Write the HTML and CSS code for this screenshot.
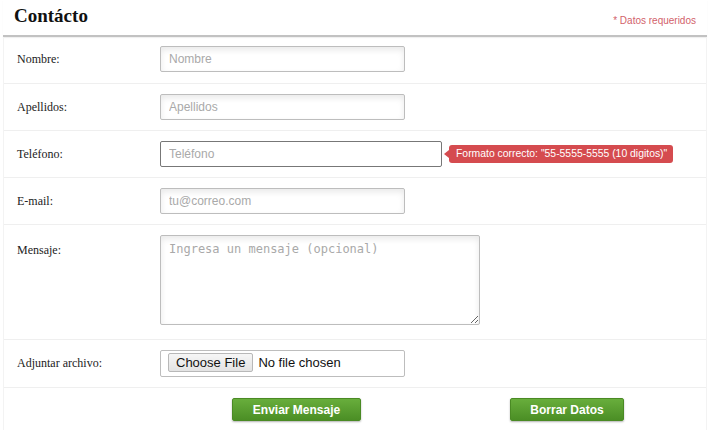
FILE: index.html
```html
<!DOCTYPE html>
<html lang="es">
<head>
<meta charset="utf-8">
<title>Contácto</title>
<link rel="stylesheet" href="styles.css">
</head>
<body>
<div class="page">
  <div class="header">
    <h1 class="title">Contácto</h1>
    <span class="required">* Datos requeridos</span>
  </div>
  <form class="form">
    <div class="row">
      <label class="label">Nombre:</label>
      <div class="field"><input class="input" type="text" placeholder="Nombre"></div>
    </div>
    <div class="row">
      <label class="label">Apellidos:</label>
      <div class="field"><input class="input" type="text" placeholder="Apellidos"></div>
    </div>
    <div class="row">
      <label class="label">Teléfono:</label>
      <div class="field">
        <input class="input input-focus" type="text" placeholder="Teléfono">
        <span class="tooltip">Formato correcto: "55-5555-5555 (10 digitos)"</span>
      </div>
    </div>
    <div class="row">
      <label class="label">E-mail:</label>
      <div class="field"><input class="input" type="text" placeholder="tu@correo.com"></div>
    </div>
    <div class="row row-top">
      <label class="label label-top">Mensaje:</label>
      <div class="field"><textarea class="textarea" placeholder="Ingresa un mensaje (opcional)"></textarea></div>
    </div>
    <div class="row">
      <label class="label">Adjuntar archivo:</label>
      <div class="field"><input class="file" type="file"></div>
    </div>
    <div class="row row-buttons">
      <button type="button" class="btn btn-send">Enviar Mensaje</button>
      <button type="button" class="btn btn-clear">Borrar Datos</button>
    </div>
  </form>
</div>
</body>
</html>
```
FILE: styles.css
```css
html, body {
  margin: 0;
  padding: 0;
  background: #fff;
}
.page {
  padding: 0 3px 0 3px;
  width: 704px;
}
.header {
  display: flex;
  align-items: center;
  justify-content: space-between;
  height: 35px;
  border-bottom: 2px solid #c2c2c2;
  box-shadow: 0 1px 1px rgba(0,0,0,0.06);
}
.title {
  margin: 0 0 3px 11px;
  font-family: "Liberation Serif", serif;
  font-weight: bold;
  font-size: 19px;
  color: #111;
}
.required {
  margin: 5px 11px 0 0;
  font-family: "Liberation Sans", Arial, sans-serif;
  font-size: 10px;
  color: #d25f6a;
}
.form {
  margin: 0;
  border-left: 1px solid #f3f3f3;
  border-right: 1px solid #f3f3f3;
}
.row {
  display: flex;
  align-items: center;
  border-top: 1px solid #efefef;
  padding: 10px 0 10px 0;
}
.row:first-child {
  border-top: none;
  padding-top: 9px;
  padding-bottom: 11px;
}
.row-top {
  align-items: flex-start;
  padding-bottom: 14px;
}
.label {
  width: 143px;
  padding-left: 13px;
  font-family: "Liberation Serif", serif;
  font-size: 12px;
  color: #222;
}
.label-top {
  padding-top: 8px;
}
.field {
  display: flex;
  align-items: center;
}
.input {
  box-sizing: border-box;
  width: 245px;
  height: 26px;
  margin: 0;
  padding: 0 8px;
  border: 1px solid #bdbdbd;
  border-radius: 2px;
  box-shadow: inset 0 3px 6px rgba(0,0,0,0.09);
  font-family: "Liberation Sans", Arial, sans-serif;
  font-size: 12px;
  color: #333;
  outline: none;
}
.input::placeholder {
  color: #a9a9a9;
}
.input-focus {
  width: 282px;
  border: 1px solid #777;
  box-shadow: none;
}
.tooltip {
  position: relative;
  margin-left: 7px;
  padding: 0 6px 0 7px;
  height: 18px;
  line-height: 18px;
  background: #d54b4f;
  border-radius: 3px;
  color: #fff;
  font-family: "Liberation Sans", Arial, sans-serif;
  font-size: 10.4px;
  white-space: nowrap;
}
.tooltip::before {
  content: "";
  position: absolute;
  left: -5px;
  top: 5px;
  border-top: 4px solid transparent;
  border-bottom: 4px solid transparent;
  border-right: 5px solid #d54b4f;
}
.textarea {
  display: block;
  box-sizing: border-box;
  width: 320px;
  height: 90px;
  margin: 0;
  padding: 6px 8px;
  border: 1px solid #bdbdbd;
  border-radius: 2px;
  box-shadow: inset 0 3px 6px rgba(0,0,0,0.09);
  font-family: "DejaVu Sans Mono", monospace;
  font-size: 12px;
  outline: none;
}
.textarea::placeholder {
  color: #a9a9a9;
}
.file {
  box-sizing: border-box;
  width: 245px;
  height: 27px;
  margin: 0;
  padding: 2px 7px;
  border: 1px solid #bdbdbd;
  border-radius: 2px;
  background: #fff;
  font-family: "Liberation Sans", Arial, sans-serif;
  font-size: 13px;
  color: #111;
}
.file::file-selector-button {
  font-family: "Liberation Sans", Arial, sans-serif;
  font-size: 13px;
  padding: 1px 7px;
  margin-right: 5px;
  border: 1px solid #b8b8b8;
  border-radius: 2px;
  background: linear-gradient(#f6f6f6, #e3e3e3);
  color: #111;
}
.row-buttons {
  padding: 10px 0 10px 228px;
  gap: 149px;
}
.btn {
  height: 23px;
  padding: 0 12px;
  border: 1px solid #4a8a24;
  border-radius: 2px;
  background: linear-gradient(#68ae3c, #4b8e25);
  box-shadow: 0 1px 2px rgba(0,0,0,0.3);
  color: #fff;
  font-family: "Liberation Sans", Arial, sans-serif;
  font-weight: bold;
  font-size: 12px;
}
.btn-send {
  width: 129px;
}
.btn-clear {
  width: 114px;
}
```
